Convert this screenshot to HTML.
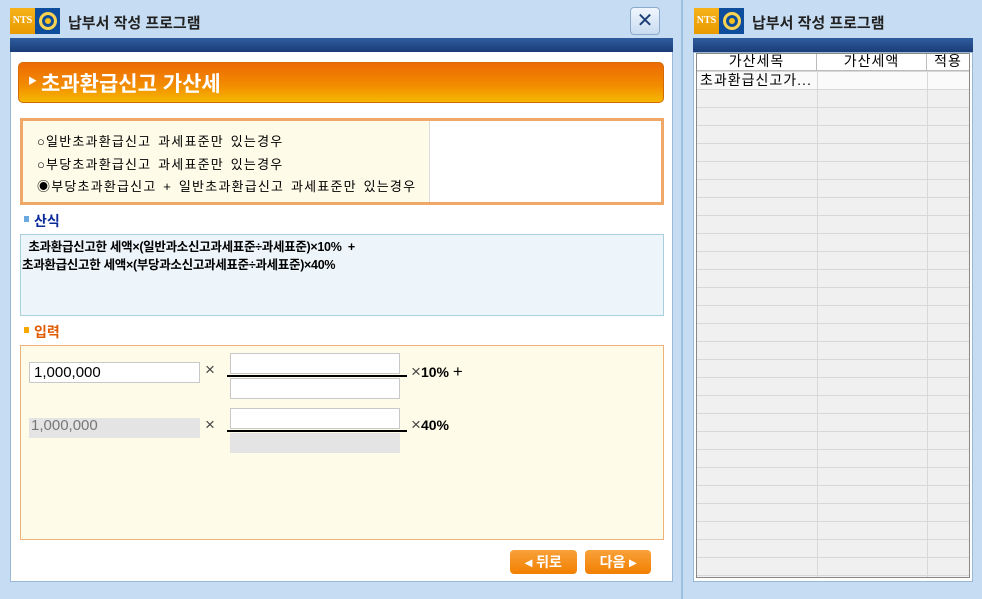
<!DOCTYPE html><html><head><meta charset="utf-8"><style>
*{margin:0;padding:0;box-sizing:border-box}
body{width:982px;height:599px;background:#c5dcf2;font-family:"Liberation Sans","Noto Sans CJK KR",sans-serif;position:relative;overflow:hidden;font-size:13px;color:#000}
.abs{position:absolute}
.logo{width:50px;height:26px;display:flex}
.logo .a{width:25px;background:linear-gradient(#f6b21a,#e99a00);color:#fff;font:bold 10px "Liberation Serif",serif;line-height:26px;text-align:center}
.logo .b{width:25px;background:#0d4d9c;display:flex;align-items:center;justify-content:center}
.flower{width:18px;height:18px;border-radius:50%;background:#f6c020;border:3px solid #f9d453;box-shadow:inset 0 0 0 3px #0d4d9c}
.title{font-size:15px;font-weight:bold;color:#222}
.bar{background:linear-gradient(#2f5c9e,#1a3d78);height:14px}
</style></head><body>
<div class="abs" style="left:0;top:0;width:683px;height:599px;border-right:2px solid #9fbfdf"></div>
<div class="abs logo" style="left:10px;top:8px"><div class="a">NTS</div><div class="b"><div class="flower"></div></div></div>
<div class="abs title" style="left:68px;top:12px">납부서 작성 프로그램</div>
<div class="abs" style="left:630px;top:7px;width:30px;height:28px;border:1px solid #8aa9cc;border-radius:4px;background:linear-gradient(#f0f6fd,#c9dcf1);text-align:center;font-size:20px;line-height:26px;color:#1c3f77">✕</div>
<div class="abs bar" style="left:10px;top:38px;width:663px"></div>
<div class="abs" style="left:10px;top:52px;width:663px;height:530px;background:#fff;border:1px solid #9ab7d6;border-top:none"></div>
<div class="abs" style="left:18px;top:62px;width:646px;height:41px;border-radius:5px;background:linear-gradient(#ec6a05,#f28a00 55%,#f6b800);border:1px solid #d56a00"></div>
<div class="abs" style="left:28px;top:74px;color:#fff;font-size:9px">▶</div>
<div class="abs" style="left:41px;top:68px;color:#fff;font-size:21px;font-weight:bold">초과환급신고 가산세</div>
<div class="abs" style="left:20px;top:118px;width:644px;height:87px;border:3px solid #f0a868;background:#fff"></div>
<div class="abs" style="left:23px;top:121px;width:407px;height:81px;background:#fefbe8;border-right:1px solid #ddd"></div>
<div class="abs" style="left:37px;top:131px;font-size:13px;line-height:22.5px;letter-spacing:1.2px;word-spacing:2px;white-space:nowrap">○일반초과환급신고 과세표준만 있는경우<br>○부당초과환급신고 과세표준만 있는경우<br>◉부당초과환급신고 + 일반초과환급신고 과세표준만 있는경우</div>
<div class="abs" style="left:24px;top:216px;width:5px;height:6px;background:#6aa8e0"></div>
<div class="abs" style="left:34px;top:211px;color:#0a2a9a;font-weight:bold;font-size:14px">산식</div>
<div class="abs" style="left:20px;top:234px;width:644px;height:82px;background:#eef5fa;border:1px solid #a9d0dd"></div>
<div class="abs" style="left:22px;top:238px;font-size:12.5px;line-height:18px;font-weight:bold;white-space:pre;letter-spacing:-0.3px">  초과환급신고한 세액×(일반과소신고과세표준÷과세표준)×10%  +
초과환급신고한 세액×(부당과소신고과세표준÷과세표준)×40%</div>
<div class="abs" style="left:24px;top:327px;width:5px;height:6px;background:#f5a800"></div>
<div class="abs" style="left:34px;top:322px;color:#e05a00;font-weight:bold;font-size:14px">입력</div>
<div class="abs" style="left:20px;top:345px;width:644px;height:195px;background:#fefbe8;border:1px solid #efb27a"></div>
<div class="abs" style="left:29px;top:362px;width:171px;height:21px;background:#fff;border:1px solid #c8c8c8;font-size:15px;padding-left:4px;line-height:19px">1,000,000</div>
<div class="abs" style="left:205px;top:360px;font-size:17px;color:#444">×</div>
<div class="abs" style="left:230px;top:353px;width:170px;height:21px;background:#fff;border:1px solid #c8c8c8"></div>
<div class="abs" style="left:227px;top:375px;width:180px;height:2px;background:#000"></div>
<div class="abs" style="left:230px;top:378px;width:170px;height:21px;background:#fff;border:1px solid #c8c8c8"></div>
<div class="abs" style="left:411px;top:362px;font-size:14px;font-weight:bold"><span style="font-weight:normal;font-size:17px;color:#444">×</span>10% <span style="font-weight:normal;font-size:17px">+</span></div>
<div class="abs" style="left:29px;top:418px;width:171px;height:20px;background:#e4e4e4;font-size:15px;color:#777;padding-left:2px;line-height:16px">1,000,000</div>
<div class="abs" style="left:205px;top:415px;font-size:17px;color:#444">×</div>
<div class="abs" style="left:230px;top:408px;width:170px;height:21px;background:#fff;border:1px solid #c8c8c8"></div>
<div class="abs" style="left:227px;top:430px;width:180px;height:2px;background:#000"></div>
<div class="abs" style="left:230px;top:433px;width:170px;height:20px;background:#e4e4e4"></div>
<div class="abs" style="left:411px;top:415px;font-size:14px;font-weight:bold"><span style="font-weight:normal;font-size:17px;color:#444">×</span>40%</div>
<div class="abs" style="left:510px;top:550px;width:67px;height:24px;border-radius:4px;background:linear-gradient(#f8a13a,#f28000);color:#fff;font-weight:bold;font-size:14px;text-align:center;line-height:24px">◂ 뒤로</div>
<div class="abs" style="left:585px;top:550px;width:66px;height:24px;border-radius:4px;background:linear-gradient(#f8a13a,#f28000);color:#fff;font-weight:bold;font-size:14px;text-align:center;line-height:24px">다음 ▸</div>
<div class="abs logo" style="left:694px;top:8px"><div class="a">NTS</div><div class="b"><div class="flower"></div></div></div>
<div class="abs title" style="left:752px;top:12px">납부서 작성 프로그램</div>
<div class="abs bar" style="left:693px;top:38px;width:280px"></div>
<div class="abs" style="left:693px;top:52px;width:280px;height:530px;background:#fff;border:1px solid #9ab7d6"></div>
<div class="abs" style="left:696px;top:53px;width:274px;height:525px;border:1px solid #888;background:repeating-linear-gradient(#f0f0f0 0 17px,#d8d8d8 17px 18px)"></div>
<div class="abs" style="left:697px;top:54px;width:272px;height:17px;background:#fff;border-bottom:1px solid #bbb;font-size:14px;line-height:15px;letter-spacing:1px">
<span class="abs" style="left:0;width:120px;text-align:center;border-right:1px solid #bbb;height:16px">가산세목</span>
<span class="abs" style="left:120px;width:110px;text-align:center;border-right:1px solid #bbb;height:16px">가산세액</span>
<span class="abs" style="left:230px;width:42px;text-align:center">적용</span></div>
<div class="abs" style="left:697px;top:72px;width:272px;height:17px;background:#fafafa;font-size:14px;line-height:17px;padding-left:3px;letter-spacing:1px">초과환급신고가...</div>
<div class="abs" style="left:817px;top:72px;width:1px;height:505px;background:#d8d8d8"></div>
<div class="abs" style="left:927px;top:72px;width:1px;height:505px;background:#d8d8d8"></div>
</body></html>
